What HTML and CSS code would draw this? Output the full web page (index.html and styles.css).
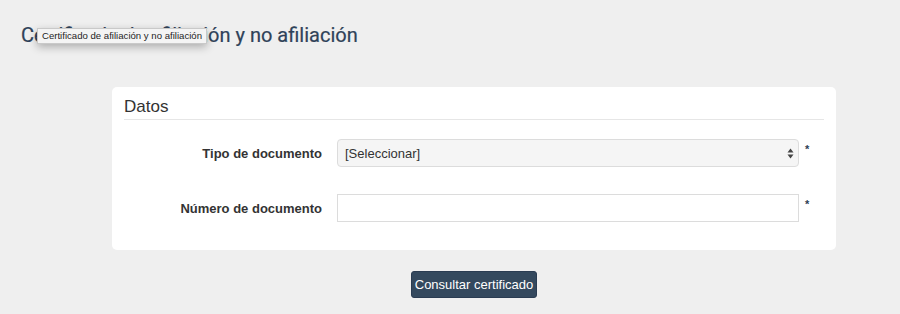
FILE: index.html
```html
<!DOCTYPE html>
<html lang="es">
<head>
<meta charset="utf-8">
<title>Certificado de afiliación y no afiliación</title>
<link rel="stylesheet" href="styles.css">
</head>
<body>
<main class="page">
  <header class="head">
    <h1 class="title">Certificado de afiliación y no afiliación</h1>
    <div class="tooltip">Certificado de afiliación y no afiliación</div>
  </header>
  <section class="wrap">
    <div class="panel">
      <h2 class="legend">Datos</h2>
      <div class="row">
        <label class="label">Tipo de documento</label>
        <div class="select">
          <span class="select-text">[Seleccionar]</span>
          <svg class="arrows" width="7" height="11" viewBox="0 0 7 11"><path d="M3.5 0.5 L6.5 4.5 H0.5 Z M3.5 10.5 L6.5 6.5 H0.5 Z" fill="#444"/></svg>
        </div>
        <span class="req">*</span>
      </div>
      <div class="row row-second">
        <label class="label">Número de documento</label>
        <div class="input"></div>
        <span class="req">*</span>
      </div>
    </div>
    <div class="actions">
      <button class="btn" type="button">Consultar certificado</button>
    </div>
  </section>
</main>
</body>
</html>
```

FILE: styles.css
```css
html, body {
  margin: 0;
  padding: 0;
  background: #efefef;
}
body {
  font-family: "Liberation Sans", Arial, sans-serif;
  color: #333;
}
.page {
  padding: 23px 0 0 0;
}
.head {
  position: relative;
  padding-left: 21px;
}
.title {
  margin: 0;
  font-family: Roboto, "Liberation Sans", sans-serif;
  font-size: 20px;
  line-height: 24px;
  font-weight: 400;
  color: #2f4259;
  -webkit-text-stroke: 0.2px #2f4259;
}
.tooltip {
  position: absolute;
  left: 37px;
  top: 5px;
  height: 14px;
  line-height: 14px;
  padding: 0 4px;
  font-size: 9.6px;
  color: #1e1e1e;
  background: #f4f4f4;
  border: 1px solid #c9c9c9;
  box-shadow: 0 3px 8px rgba(0,0,0,0.28);
  white-space: nowrap;
}
.wrap {
  margin: 40px 0 0 112px;
  width: 724px;
}
.panel {
  background: #fff;
  border-radius: 5px;
  padding: 10px 12px 28px 12px;
}
.legend {
  margin: 0;
  font-size: 17px;
  line-height: 20px;
  font-weight: normal;
  color: #333;
  padding-bottom: 2px;
  border-bottom: 1px solid #e6e6e6;
  margin-bottom: 19px;
}
.row {
  display: grid;
  grid-template-columns: 198px 462px auto;
  column-gap: 15px;
  align-items: center;
  height: 28px;
}
.row-second {
  margin-top: 27px;
}
.label {
  text-align: right;
  font-weight: bold;
  font-size: 13px;
  color: #333;
}
.select {
  box-sizing: border-box;
  height: 28px;
  background: #f5f5f5;
  border: 1px solid #dcdcdc;
  border-radius: 4px;
  display: flex;
  align-items: center;
  justify-content: space-between;
  padding: 0 4px 0 7px;
  font-size: 13px;
  color: #333;
}
.arrows {
  display: block;
}
.input {
  box-sizing: border-box;
  height: 28px;
  background: #fff;
  border: 1px solid #dcdcdc;
}
.req {
  margin-left: -9px;
  align-self: start;
  margin-top: 4px;
  font-size: 11px;
  font-weight: bold;
  color: #2c3e55;
}
.actions {
  display: flex;
  justify-content: center;
  padding-top: 21px;
}
.btn {
  height: 27px;
  width: 126px;
  padding: 0;
  border: 1px solid #2a3c52;
  border-radius: 3px;
  background: #34495e;
  color: #fff;
  font-family: "Liberation Sans", Arial, sans-serif;
  font-size: 13px;
}
```
